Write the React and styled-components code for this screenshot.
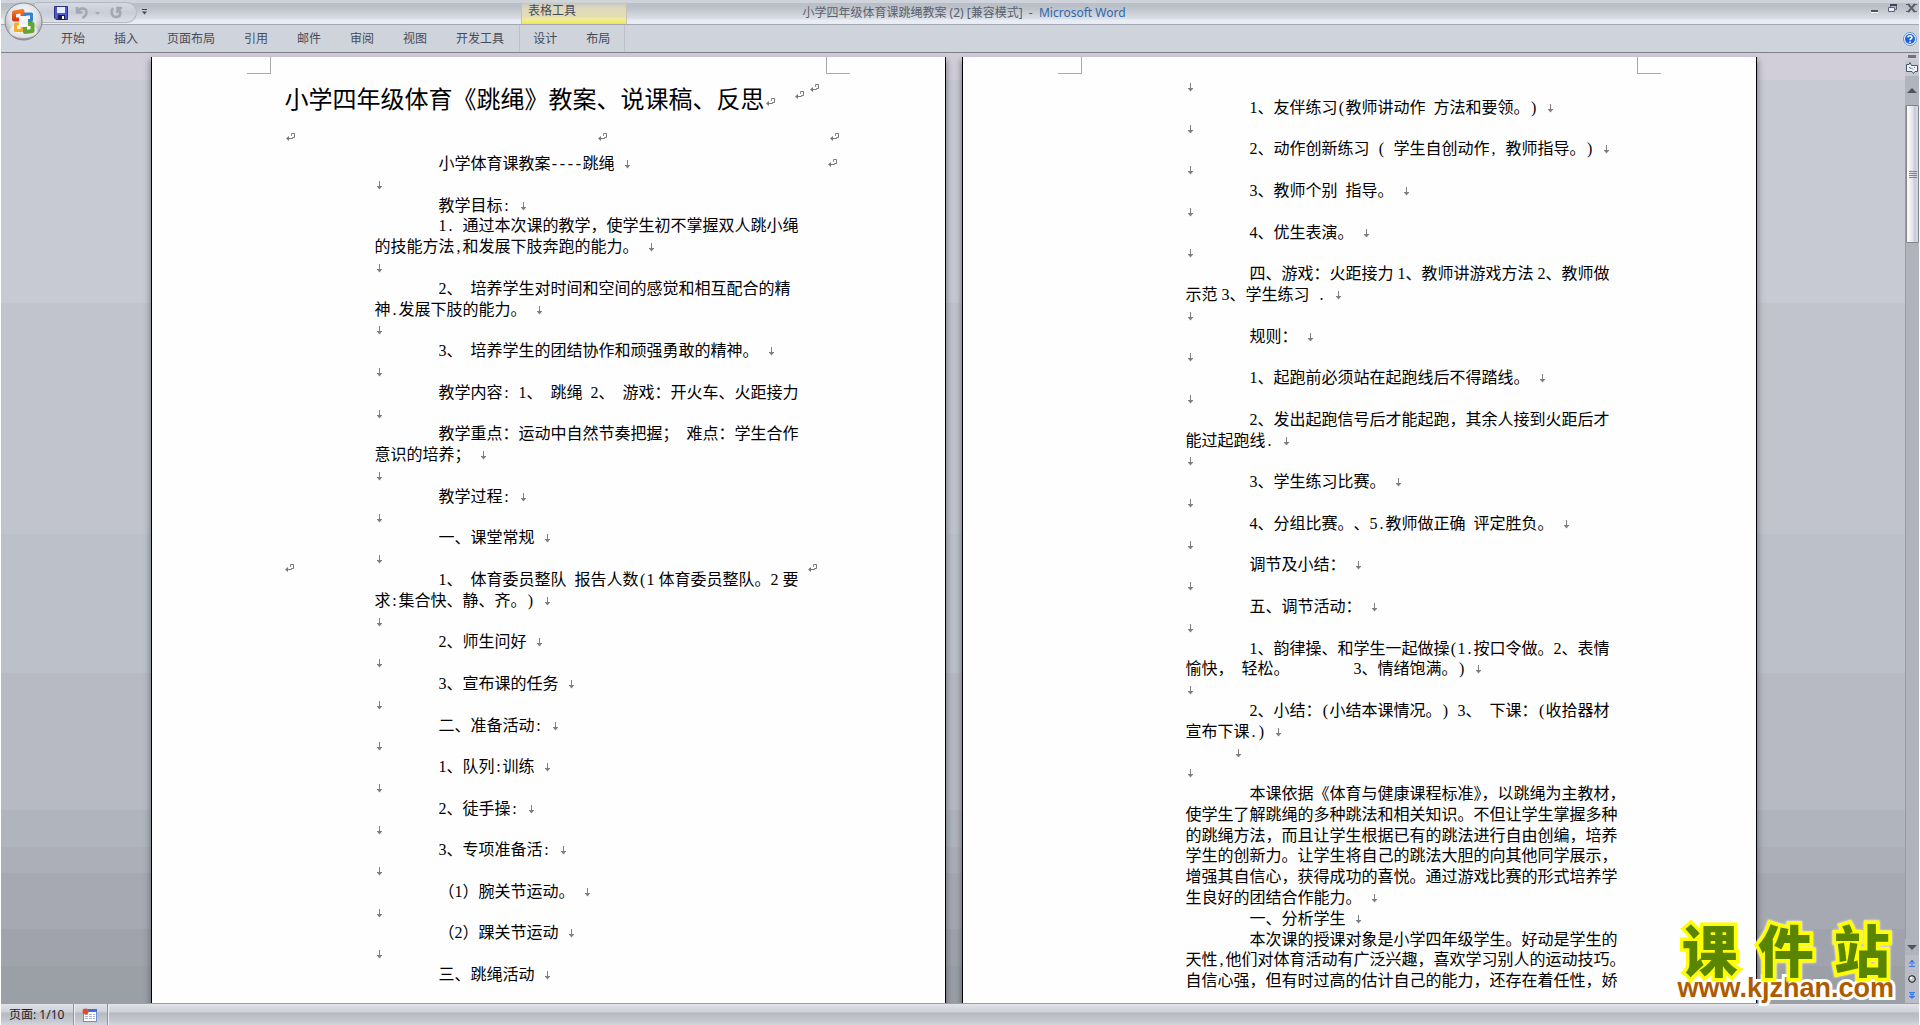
import React from "react";
import styled, { createGlobalStyle, css } from "styled-components";

const UI_FONT = `"Noto Sans", "Noto Sans CJK SC", sans-serif`;
const DOC_FONT = `"Noto Sans CJK SC", sans-serif`;

const GlobalStyle = createGlobalStyle`
  *, *::before, *::after { box-sizing: border-box; }
  html, body, #root { height: 100%; }
  body { margin: 0; background: #fff; overflow: hidden; }
  button { font: inherit; color: inherit; background: none; border: 0; padding: 0; margin: 0; }
  svg { display: block; }
`;

const Window = styled.div`
  position: relative;
  display: flex;
  flex-direction: column;
  height: 100%;
  margin: 0 1px;
  font: 12px/16px ${UI_FONT};
  color: #454c58;
`;

/* ---------- title bar ---------- */

const Header = styled.header`
  position: relative;
  flex: none;
`;

const TitleBar = styled.div`
  display: grid;
  grid-template-columns: 1fr auto 1fr;
  height: 25px;
  border-bottom: 1px solid #a5a9b4;
  background: linear-gradient(
    #cfd3db 0 3px, #b9bdc6 3px, #bfc3cb 9px, #cdd1d8 14px, #dde0e6 19px, #e8ecf4 20px
  );
`;

const TitleLeft = styled.div`
  display: flex;
  padding-left: 34px;
`;

const QuickAccess = styled.div`
  display: flex;
  align-items: center;
  gap: 7px;
  width: 102px;
  height: 21px;
  margin-top: 2px;
  padding-left: 19px;
  border: 1px solid #b4b8c2;
  border-left: 0;
  border-radius: 0 11px 11px 0;
  background: linear-gradient(#d6d9e0, #c9cdd6 50%, #dcdfe6);
`;

const IconButton = styled.button`
  display: flex;
  align-items: center;
  justify-content: center;
`;

const MoreButton = styled(IconButton)`
  width: 14px;
  height: 23px;
`;

const Caption = styled.h1`
  margin: 0;
  padding: 5px 0 0 8px;
  font: 12px/16px ${UI_FONT};
  color: #5a616d;
  white-space: pre;
`;

const AppName = styled.span`
  color: #2f69ab;
`;

const WindowButtons = styled.div`
  display: flex;
  justify-content: flex-end;
  gap: 8px;
  height: 16px;
  padding-right: 2px;
`;

const OfficeButton = styled.button`
  position: absolute;
  left: 3px;
  top: 2px;
  width: 39px;
  height: 39px;
`;

/* ---------- ribbon tabs ---------- */

const TabStrip = styled.nav`
  display: flex;
  align-items: stretch;
  height: 28px;
  padding-left: 60px;
  border-bottom: 1px solid #7c818a;
  background: #cfd3dc;
`;

const Tabs = styled.div`
  display: flex;
  align-items: center;
  gap: 29px;
  padding-right: 15px;
`;

const ContextTabs = styled(Tabs)`
  width: 106px;
  padding: 0 0 0 13px;
  border: 1px solid #bcc0ca;
  border-width: 0 1px;
`;

const Tab = styled.button`
  height: 24px;
  font-size: 12px;
  line-height: 24px;
  white-space: nowrap;
`;

const HelpButton = styled(IconButton)`
  margin-left: auto;
  padding-right: 2px;
`;

const ContextTitle = styled.div`
  position: absolute;
  left: 520px;
  top: 2px;
  width: 106px;
  height: 22px;
  padding-left: 6px;
  font-size: 12px;
  line-height: 18px;
  border: 1px solid #c4c4b4;
  border-width: 0 1px;
  background: linear-gradient(
    rgba(205, 205, 190, 0.3), #dfd9bd 30%, #e3ddb4 65%, #f0e9a0 75%, #f3ec8a 85%, #f8ea3c
  );
`;

/* ---------- workspace ---------- */

const Workspace = styled.div`
  display: flex;
  flex: 1;
  min-height: 0;
  background: linear-gradient(
    #d2ced9 0 2.8%, #c8cad3 2.8% 26.3%, #c2c4cd 26.3% 50.6%, #bcc0c9 50.6% 65.3%,
    #b7bac3 65.3% 79.7%, #b0b4bc 79.7% 83.6%, #acafb7 83.6% 86.3%, #a7a9b2 86.3% 92.2%,
    #a0a3ab 92.2% 96.1%, #9b9fa6 96.1%
  );
`;

const Canvas = styled.main`
  display: flex;
  flex: 1;
  justify-content: center;
  gap: 16px;
  min-width: 0;
  padding: 4px 0 0 1px;
`;

const Sheet = styled.article`
  flex: none;
  width: 795px;
  overflow: hidden;
  background: #fefefe;
  border: 1px solid #000;
  border-width: 0 1px;
  box-shadow: 0 4px 6px 1px rgba(60, 62, 72, 0.55);
  color: #000;
`;

const CropMarks = styled.div`
  display: flex;
  justify-content: space-between;
  height: 17px;
  padding: 0 95px;
`;

const Corner = styled.span`
  width: 24px;
  border: 0 solid #a8a8b4;
  border-bottom-width: 1px;
  ${(p) => (p.$side === "left" ? css`border-right-width: 1px;` : css`border-left-width: 1px;`)}
`;

const TitleRow = styled.div`
  display: flex;
  align-items: center;
  height: 48px;
  padding-left: 133px;
`;

const DocTitle = styled.h2`
  margin: 0;
  font: 400 24px/36px ${DOC_FONT};
  text-spacing-trim: space-all;
  white-space: nowrap;
`;

const TitleMarks = styled.div`
  display: flex;
  align-items: center;
  height: 24px;
  margin-bottom: 6px;
  & > :nth-child(1) { align-self: flex-end; }
  & > :nth-child(2) { margin: 0 4px 0 18px; }
  & > :nth-child(3) { align-self: flex-start; }
`;

const BlankRow = styled.div`
  display: grid;
  grid-template-columns: 312px 232px auto;
  align-items: center;
  height: 30px;
  padding-left: 133px;
`;

const Cells = styled.div`
  display: grid;
  grid-template-columns: 91px 432px 20px auto;
  padding: ${(p) => p.$top || 0}px 0 0 132px;
`;

const Cell = styled.div`
  display: flex;
  align-items: ${(p) => p.$align || "center"};
  padding-top: ${(p) => (p.$align ? 6 : 0)}px;
`;

const Body = styled.div`
  grid-column: 2;
  font: 400 16px/1.3 ${DOC_FONT};
  text-spacing-trim: space-all;
`;

const Line = styled.p`
  height: 1.3em;
  margin: 0;
  padding-left: ${(p) => p.$indent / 2}em;
  white-space: pre;
  text-spacing-trim: ${(p) => (p.$trim ? "normal" : "space-all")};
`;

const Half = styled.span`
  display: inline-block;
  width: 0.5em;
  font-family: "Liberation Serif", serif;
  line-height: 1;
  text-align: center;
`;

const Quarter = styled(Half)`
  width: 0.25em;
`;

const BreakGlyph = styled.svg`
  display: inline-block;
  vertical-align: -1px;
`;

/* ---------- scroll bar ---------- */

const ScrollColumn = styled.aside`
  display: flex;
  flex: none;
  flex-direction: column;
  align-items: stretch;
  width: 14px;
  background: #b9bcc4;
`;

const SplitHandle = styled.button`
  height: 7px;
  border: 2px solid #d2ced9;
  border-width: 2px 3px;
  background: #70737c;
`;

const ScrollButton = styled(IconButton)`
  height: ${(p) => p.$h}px;
  background: ${(p) => p.$bg || "#b0b4bc"};
`;

const Track = styled.div`
  flex: 1;
  border-left: 1px solid #979ba3;
  background: #b0b3bb;
`;

const Thumb = styled.div`
  display: flex;
  flex-direction: column;
  align-items: center;
  justify-content: center;
  gap: 1px;
  height: 138px;
  border: 1px solid #81858e;
  border-radius: 1px;
  background: linear-gradient(90deg, #fdf8ea 0 2px, #eeeef4 3px, #e2e4ec 6px, #c9ccd6 7px, #d5d8e0);
`;

const Grip = styled.span`
  width: 8px;
  height: 1px;
  background: #7d818a;
`;

/* ---------- status bar ---------- */

const StatusBar = styled.footer`
  display: flex;
  flex: none;
  height: 22px;
  border-top: 1px solid #9c9fa8;
  background: linear-gradient(#e0e2e8, #cdd0d7 8px, #b6b9c1 9px, #c3c6ce 16px, #d2d5dc);
  color: #1d2129;
`;

const StatusItem = styled.button`
  display: flex;
  align-items: center;
  padding: 0 9px 0 8px;
  border-right: 1px solid #8e929b;
  box-shadow: 1px 0 #eceef3;
  white-space: pre;
`;

/* ---------- watermark ---------- */

const Watermark = styled.a`
  position: absolute;
  right: 25px;
  bottom: 22px;
  display: flex;
  flex-direction: column;
  align-items: center;
  text-decoration: none;
`;

const SiteName = styled.span`
  display: flex;
  gap: 20px;
  font: 900 56px/50px ${DOC_FONT};
  color: #5a8500;
  paint-order: stroke fill;
  -webkit-text-stroke: 7px #ffff00;
  filter: drop-shadow(0 0 1px #fff);
`;

const SiteUrl = styled.span`
  font: bold 27px/30px "Liberation Sans", Arial, sans-serif;
  color: #ad5a00;
  paint-order: stroke fill;
  -webkit-text-stroke: 6px #fff;
`;

/* ---------- document marks ---------- */

const ReturnMark = () => (
  <svg width="11" height="10" viewBox="0 0 11 10" fill="none" stroke="#777" aria-hidden="true">
    <path d="M6.5 1.5H9.5V5.5H7.5V6.5H3" />
    <path d="M6.5 1.5V4" strokeWidth=".8" />
    <path d="M1 6.5L4 4V9Z" fill="#777" stroke="none" />
  </svg>
);

const BreakMark = () => (
  <BreakGlyph width="8" height="11" viewBox="0 0 8 11" aria-hidden="true">
    <path d="M4.500 1V9M2 6.500H7" fill="none" stroke="#808080" />
    <path d="M2 6.500H7L4.500 9.500Z" fill="#808080" />
  </BreakGlyph>
);

/* Splits a line into full-width runs and half-width cells: "_" is a quarter
   gap between scripts and "↓" is a manual line break. */
function renderLine(text) {
  return text.split(/([\x20-\x7e↓])/).filter(Boolean).map((part, i) => {
    if (part === "↓") return <BreakMark key={i} />;
    if (part === "_") return <Quarter key={i}> </Quarter>;
    if (/^[\x20-\x7e]$/.test(part)) return <Half key={i}>{part}</Half>;
    return part;
  });
}

const PAGE_ONE = [
  [8, "小学体育课教案----跳绳 ↓"],
  [0, "↓"],
  [8, "教学目标: ↓"],
  [8, "1. 通过本次课的教学，使学生初不掌握双人跳小绳"],
  [0, "的技能方法,和发展下肢奔跑的能力。 ↓"],
  [0, "↓"],
  [8, "2、 培养学生对时间和空间的感觉和相互配合的精"],
  [0, "神.发展下肢的能力。 ↓"],
  [0, "↓"],
  [8, "3、 培养学生的团结协作和顽强勇敢的精神。 ↓"],
  [0, "↓"],
  [8, "教学内容: 1、 跳绳 2、 游戏：开火车、火距接力"],
  [0, "↓"],
  [8, "教学重点：运动中自然节奏把握； 难点：学生合作"],
  [0, "意识的培养； ↓"],
  [0, "↓"],
  [8, "教学过程: ↓"],
  [0, "↓"],
  [8, "一、课堂常规 ↓"],
  [0, "↓"],
  [8, "1、 体育委员整队 报告人数(1_体育委员整队。2_要"],
  [0, "求:集合快、静、齐。) ↓"],
  [0, "↓"],
  [8, "2、师生问好 ↓"],
  [0, "↓"],
  [8, "3、宣布课的任务 ↓"],
  [0, "↓"],
  [8, "二、准备活动: ↓"],
  [0, "↓"],
  [8, "1、队列:训练 ↓"],
  [0, "↓"],
  [8, "2、徒手操: ↓"],
  [0, "↓"],
  [8, "3、专项准备活: ↓"],
  [0, "↓"],
  [8, "（1）腕关节运动。 ↓"],
  [0, "↓"],
  [8, "（2）踝关节运动 ↓"],
  [0, "↓"],
  [8, "三、跳绳活动 ↓"],
];

const PAGE_TWO = [
  [0, "↓"],
  [8, "1、友伴练习(教师讲动作 方法和要领。) ↓"],
  [0, "↓"],
  [8, "2、动作创新练习 ( 学生自创动作, 教师指导。) ↓"],
  [0, "↓"],
  [8, "3、教师个别 指导。 ↓"],
  [0, "↓"],
  [8, "4、优生表演。 ↓"],
  [0, "↓"],
  [8, "四、游戏：火距接力_1、教师讲游戏方法_2、教师做"],
  [0, "示范_3、学生练习 . ↓"],
  [0, "↓"],
  [8, "规则： ↓"],
  [0, "↓"],
  [8, "1、起跑前必须站在起跑线后不得踏线。 ↓"],
  [0, "↓"],
  [8, "2、发出起跑信号后才能起跑，其余人接到火距后才"],
  [0, "能过起跑线. ↓"],
  [0, "↓"],
  [8, "3、学生练习比赛。 ↓"],
  [0, "↓"],
  [8, "4、分组比赛。、5.教师做正确 评定胜负。 ↓"],
  [0, "↓"],
  [8, "调节及小结： ↓"],
  [0, "↓"],
  [8, "五、调节活动： ↓"],
  [0, "↓"],
  [8, "1、韵律操、和学生一起做操(1.按口令做。2、表情"],
  [0, "愉快， 轻松。        3、情绪饱满。) ↓"],
  [0, "↓"],
  [8, "2、小结：(小结本课情况。) 3、 下课：(收拾器材"],
  [0, "宣布下课.) ↓"],
  [6, "↓"],
  [0, "↓"],
  [8, "本课依据《体育与健康课程标准》，以跳绳为主教材，", true],
  [0, "使学生了解跳绳的多种跳法和相关知识。不但让学生掌握多种"],
  [0, "的跳绳方法，而且让学生根据已有的跳法进行自由创编，培养"],
  [0, "学生的创新力。让学生将自己的跳法大胆的向其他同学展示，"],
  [0, "增强其自信心，获得成功的喜悦。通过游戏比赛的形式培养学"],
  [0, "生良好的团结合作能力。 ↓"],
  [8, "一、分析学生 ↓"],
  [8, "本次课的授课对象是小学四年级学生。好动是学生的"],
  [0, "天性,他们对体育活动有广泛兴趣，喜欢学习别人的运动技巧。"],
  [0, "自信心强，但有时过高的估计自己的能力，还存在着任性，娇"],
];

const TABS = ["开始", "插入", "页面布局", "引用", "邮件", "审阅", "视图", "开发工具"];

const Lines = ({ rows }) => (
  <Body>
    {rows.map(([indent, text, trim], i) => (
      <Line key={i} $indent={indent} $trim={trim}>{renderLine(text)}</Line>
    ))}
  </Body>
);

/* ---------- chrome icons ---------- */

const OfficeLogo = () => (
  <svg width="39" height="39" viewBox="0 0 39 39" aria-hidden="true">
    <defs>
      <radialGradient id="orb" cx=".5" cy=".35" r=".65">
        <stop offset="0" stopColor="#fff" />
        <stop offset=".6" stopColor="#e0e1e5" />
        <stop offset=".88" stopColor="#b5b7be" />
        <stop offset="1" stopColor="#8a8d95" />
      </radialGradient>
      <linearGradient id="flame" x1="0" y1="0" x2="0" y2="1">
        <stop offset="0" stopColor="#f0792a" />
        <stop offset="1" stopColor="#d43c14" />
      </linearGradient>
    </defs>
    <circle cx="19.500" cy="19.500" r="18.500" fill="url(#orb)" stroke="#85888f" />
    <ellipse cx="19.500" cy="29" rx="14" ry="7" fill="#fff" opacity=".6" />
    <g fill="none" strokeLinejoin="round">
      <path d="M15 17.500H10V10.500L18.500 9V14" stroke="url(#flame)" strokeWidth="4" />
      <path d="M21 14V12H27.500V18.500H24" stroke="#2f86cf" strokeWidth="3" />
      <path d="M15 22H11.500V28.500H18V25" stroke="#f3ae22" strokeWidth="3" />
      <path d="M21 25V30L28.500 29V22H24" stroke="#62a62f" strokeWidth="4" />
    </g>
  </svg>
);

const SaveIcon = () => (
  <svg width="14" height="14" viewBox="0 0 14 14" aria-hidden="true">
    <path d="M.5.5H13.500V13.500H2L.5 12Z" fill="#4a5ad2" stroke="#2a2f8a" />
    <rect x="3" y="1" width="8" height="6" fill="#e6ecfb" />
    <rect x="4" y="9" width="7" height="5" fill="#1b1d4a" />
    <rect x="8" y="10" width="2" height="3" fill="#fff" />
  </svg>
);

const UndoIcon = () => (
  <svg width="28" height="13" viewBox="0 0 28 13" fill="none" aria-hidden="true">
    <path d="M2 1V6.500H7.500M2.500 6C4 1.500 11.500 1 11.500 6C11.500 8.500 10 10.500 7.500 12" stroke="#a2a7b2" strokeWidth="2.500" />
    <path d="M20 6H25L22.500 9Z" fill="#a2a7b2" />
  </svg>
);

const RedoIcon = () => (
  <svg width="13" height="13" viewBox="0 0 13 13" fill="none" stroke="#a2a7b2" strokeWidth="2.500" aria-hidden="true">
    <path d="M3 2C.5 6 1.500 11 6 11C11 11 11.500 6 8.500 3M7.500 7V2H12" />
  </svg>
);

const Arrow = ({ down }) => (
  <svg width="10" height="6" viewBox="0 0 10 6" aria-hidden="true">
    <path d={down ? "M0 1H10L5 6Z" : "M0 5H10L5 0Z"} fill="#4d5563" />
  </svg>
);

const PageJump = ({ down }) => (
  <svg width="6" height="7" viewBox="0 0 6 7" aria-hidden="true" stroke="#3a7bf0" fill="#3a7bf0">
    {down ? <path d="M0 .5H6M1 2H5L3 3.500ZM0 4.500H6M1.500 5L3 6.500L4.500 5Z" />
          : <path d="M0 6.500H6M3 0L1.500 2H4.500ZM0 3H6M3 3.500V6" />}
  </svg>
);

export default function App() {
  return (
    <>
      <GlobalStyle />
      <Window>
        <Header>
          <TitleBar>
            <TitleLeft>
              <QuickAccess>
                <IconButton aria-label="保存"><SaveIcon /></IconButton>
                <IconButton aria-label="撤消"><UndoIcon /></IconButton>
                <IconButton aria-label="恢复"><RedoIcon /></IconButton>
              </QuickAccess>
              <MoreButton aria-label="自定义快速访问工具栏">
                <svg width="5" height="6" viewBox="0 0 5 6" fill="#434a57">
                  <path d="M0 0H5V1H0ZM0 2.500H5L2.500 5.500Z" />
                </svg>
              </MoreButton>
            </TitleLeft>
            <Caption>
              小学四年级体育课跳绳教案 (2) [兼容模式]  -  <AppName>Microsoft Word</AppName>
            </Caption>
            <WindowButtons>
              <IconButton aria-label="最小化">
                <svg width="8" height="16" viewBox="0 0 8 16">
                  <path d="M0 10H7V12H0Z" fill="#4c535f" /><path d="M0 12H7V13H0Z" fill="#fff" />
                </svg>
              </IconButton>
              <IconButton aria-label="还原">
                <svg width="11" height="16" viewBox="0 0 11 16" fill="none" stroke="#59627a">
                  <path d="M3.500 7V4.500H9.500V9.500H7" /><path d="M3 5H10" stroke="#3d4350" strokeWidth="2" />
                  <path d="M1.500 7.500H7.500V11.500H1.500Z" fill="#e8ecf4" />
                </svg>
              </IconButton>
              <IconButton aria-label="关闭">
                <svg width="11" height="16" viewBox="0 0 11 16" fill="none" stroke="#5c6470" strokeWidth="2">
                  <path d="M2 4L9 12M9 4L2 12" /><path d="M0 4.500H4M7 4.500H11M0 11.500H4M7 11.500H11" strokeWidth="1" />
                </svg>
              </IconButton>
            </WindowButtons>
          </TitleBar>
          <TabStrip>
            <Tabs>{TABS.map((t) => <Tab key={t}>{t}</Tab>)}</Tabs>
            <ContextTabs><Tab>设计</Tab><Tab>布局</Tab></ContextTabs>
            <HelpButton aria-label="帮助">
              <svg width="14" height="14" viewBox="0 0 14 14">
                <circle cx="7" cy="7" r="6.500" fill="#e8effc" stroke="#6e93c8" />
                <circle cx="7" cy="7" r="5" fill="#1e62dc" />
                <path d="M5 5.500C5 3 9 3 9 5.500C9 7 7 6.500 7 8.300" fill="none" stroke="#fff" strokeWidth="1.500" />
                <circle cx="7" cy="10.200" r=".9" fill="#fff" />
              </svg>
            </HelpButton>
          </TabStrip>
          <ContextTitle>表格工具</ContextTitle>
          <OfficeButton aria-label="Office 按钮"><OfficeLogo /></OfficeButton>
        </Header>

        <Workspace>
          <Canvas>
            <Sheet>
              <CropMarks><Corner $side="left" /><Corner $side="right" /></CropMarks>
              <TitleRow>
                <DocTitle>小学四年级体育《跳绳》教案、说课稿、反思</DocTitle>
                <TitleMarks><ReturnMark /><ReturnMark /><ReturnMark /></TitleMarks>
              </TitleRow>
              <BlankRow><ReturnMark /><ReturnMark /><ReturnMark /></BlankRow>
              <Cells>
                <Cell><ReturnMark /></Cell>
                <Lines rows={PAGE_ONE} />
                <Cell><ReturnMark /></Cell>
                <Cell $align="flex-start"><ReturnMark /></Cell>
              </Cells>
            </Sheet>
            <Sheet>
              <CropMarks><Corner $side="left" /><Corner $side="right" /></CropMarks>
              <Cells $top={1}><Lines rows={PAGE_TWO} /></Cells>
            </Sheet>
          </Canvas>
          <ScrollColumn>
            <SplitHandle aria-label="拆分窗口" />
            <ScrollButton $h={16} $bg="#c6c9d1" aria-label="标尺">
              <svg width="12" height="12" viewBox="0 0 12 12" fill="#eef1f8" stroke="#46566f">
                <path d="M.5 2.500H3L4 .5L5.500 3.500H11.500V9.500H9L7.500 11.500L6 9.500H.5Z" />
                <path d="M3 5L5 7M5 5.500L7 7.500M8 5L9 6" stroke="#6c7890" />
              </svg>
            </ScrollButton>
            <ScrollButton $h={29} aria-label="向上滚动"><Arrow /></ScrollButton>
            <Track>
              <Thumb><Grip /><Grip /><Grip /><Grip /></Thumb>
            </Track>
            <ScrollButton $h={16} aria-label="向下滚动"><Arrow down /></ScrollButton>
            <ScrollButton $h={16} $bg="#b9bcc5" aria-label="前一页"><PageJump /></ScrollButton>
            <ScrollButton $h={16} $bg="#b9bcc5" aria-label="选择浏览对象">
              <svg width="8" height="8" viewBox="0 0 8 8">
                <circle cx="4" cy="4" r="3.300" fill="#c4c4c4" stroke="#111" /><circle cx="3" cy="3" r="1.300" fill="#fff" />
              </svg>
            </ScrollButton>
            <ScrollButton $h={16} $bg="#b9bcc5" aria-label="下一页"><PageJump down /></ScrollButton>
          </ScrollColumn>
        </Workspace>

        <StatusBar>
          <StatusItem>页面: 1/10</StatusItem>
          <StatusItem aria-label="宏">
            <svg width="16" height="14" viewBox="0 0 16 14">
              <rect x="1.500" y="1.500" width="13" height="12" fill="#fff" stroke="#6a8ed0" />
              <rect x="1" y="1" width="14" height="3" fill="#3b6fd8" />
              <path d="M3 6.500H13M3 8.500H13M3 10.500H13" stroke="#9db3dc" strokeDasharray="3 1" />
              <circle cx="3.500" cy="3.500" r="3" fill="#d9502c" />
            </svg>
          </StatusItem>
        </StatusBar>

        <Watermark href="#www.kjzhan.com">
          <SiteName><span>课</span><span>件</span><span>站</span></SiteName>
          <SiteUrl>www.kjzhan.com</SiteUrl>
        </Watermark>
      </Window>
    </>
  );
}
